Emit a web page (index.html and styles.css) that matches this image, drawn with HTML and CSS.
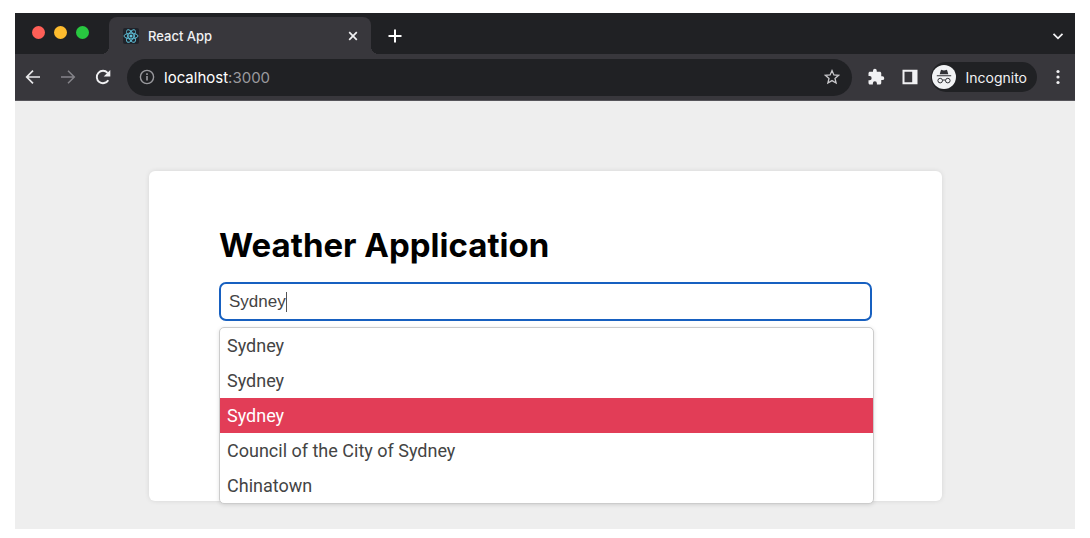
FILE: index.html
```html
<!DOCTYPE html>
<html lang="en">
<head>
<meta charset="utf-8">
<meta name="viewport" content="width=device-width, initial-scale=1">
<title>React App</title>
<link rel="stylesheet" href="styles.css">
</head>
<body>
<div class="window">
  <header class="tabstrip">
    <div class="lights"><span class="light red"></span><span class="light yellow"></span><span class="light green"></span></div>
    <div class="tab">
      <svg class="favicon" viewBox="0 0 16 16" width="16" height="16" aria-hidden="true">
        <rect width="16" height="16" rx="2" fill="#20232a"/>
        <g fill="none" stroke="#61c5de" stroke-width="0.9">
          <ellipse cx="8" cy="8" rx="7" ry="2.8"/>
          <ellipse cx="8" cy="8" rx="7" ry="2.8" transform="rotate(60 8 8)"/>
          <ellipse cx="8" cy="8" rx="7" ry="2.8" transform="rotate(120 8 8)"/>
        </g>
        <circle cx="8" cy="8" r="1.5" fill="#61c5de"/>
      </svg>
      <span class="tab-title">React App</span>
      <button class="icon-btn" aria-label="Close tab"><svg viewBox="0 0 16 16" width="16" height="16"><path d="M4.2 4.2l7.6 7.6M11.8 4.2l-7.6 7.6" stroke="#f1f1f3" stroke-width="1.7"/></svg></button>
    </div>
    <button class="icon-btn new-tab" aria-label="New tab"><svg viewBox="0 0 16 16" width="16" height="16"><path d="M8 1.5v13M1.5 8h13" stroke="#fff" stroke-width="2"/></svg></button>
    <button class="icon-btn tab-search" aria-label="Search tabs"><svg viewBox="0 0 16 16" width="16" height="16"><path d="M3.5 5.8L8 10.3l4.500-4.500" fill="none" stroke="#f1f1f3" stroke-width="1.800"/></svg></button>
  </header>
  <nav class="toolbar" aria-label="Browser toolbar">
    <div class="nav-group">
      <button class="icon-btn" aria-label="Back"><svg viewBox="0 0 16 16" width="16" height="16"><path d="M15 8H2M8 1.700L1.700 8 8 14.300" fill="none" stroke="#e8e8ea" stroke-width="1.700"/></svg></button>
      <button class="icon-btn" aria-label="Forward"><svg viewBox="0 0 16 16" width="16" height="16"><path d="M1 8h13M8 1.700L14.300 8 8 14.300" fill="none" stroke="#85848a" stroke-width="1.500"/></svg></button>
      <button class="icon-btn" aria-label="Reload"><svg viewBox="0 0 16 16" width="16" height="16"><path d="M13.300 11.200A6.200 6.200 0 1 1 12.600 3.800" fill="none" stroke="#f1f1f3" stroke-width="1.900"/><path d="M15.300 1v6.600H8.700z" fill="#f1f1f3"/></svg></button>
    </div>
    <div class="omnibox">
      <svg viewBox="0 0 16 16" width="16" height="16" aria-hidden="true"><circle cx="8" cy="8" r="6.600" fill="none" stroke="#9a9a9e" stroke-width="1.400"/><path d="M8 7v4.500M8 4.300v1.600" stroke="#9a9a9e" stroke-width="1.600"/></svg>
      <span class="url">localhost<span class="port">:3000</span></span>
      <button class="icon-btn" aria-label="Bookmark this tab"><svg viewBox="0 0 16 16" width="16" height="16"><path d="M8 1.600l1.900 4.300 4.700.4-3.600 3.100 1.100 4.600L8 11.600 3.900 14 5 9.400 1.400 6.300l4.700-.4z" fill="none" stroke="#c8c8cb" stroke-width="1.300"/></svg></button>
    </div>
    <div class="actions">
      <button class="icon-btn" aria-label="Extensions"><svg viewBox="0 0 24 24" width="18" height="18"><path fill="#f1f1f3" d="M20.500 11H19V7c0-1.100-.9-2-2-2h-4V3.500a2.500 2.500 0 0 0-5 0V5H4c-1.100 0-2 .9-2 2v3.800h1.500a2.700 2.700 0 0 1 0 5.400H2V20c0 1.100.9 2 2 2h3.800v-1.500a2.700 2.700 0 0 1 5.400 0V22H17c1.100 0 2-.9 2-2v-4h1.500a2.500 2.500 0 0 0 0-5z"/></svg></button>
      <button class="icon-btn" aria-label="Side panel"><svg viewBox="0 0 16 16" width="16" height="16"><path fill="#f1f1f3" fill-rule="evenodd" d="M.5.800h15v14.400H.5zM2.500 2.800v10.400h7.700V2.800z"/></svg></button>
      <button class="profile"><svg viewBox="0 0 24 24" width="24" height="24" aria-hidden="true"><circle cx="12" cy="12" r="12" fill="#f1f2f4"/><path fill="#303135" d="M8.800 5.500q.3-.8 1.100-.6l2.100.5 2.100-.5q.8-.2 1.100.6l1.100 3.700H7.700zM4.800 10.200h14.400v1H4.800z"/><g fill="none" stroke="#303135" stroke-width="1"><circle cx="8.200" cy="15.600" r="2.300"/><circle cx="15.800" cy="15.600" r="2.300"/><path d="M10.500 15.300q1.500-.8 3 0"/></g></svg><span>Incognito</span></button>
      <button class="icon-btn" aria-label="Menu"><svg viewBox="0 0 16 16" width="16" height="16" fill="#f1f1f3"><circle cx="8" cy="2.500" r="1.600"/><circle cx="8" cy="8" r="1.600"/><circle cx="8" cy="13.500" r="1.600"/></svg></button>
    </div>
  </nav>
  <main class="page">
    <section class="card">
      <h1 class="title">Weather Application</h1>
      <div class="search">
        <input class="search-input" type="text" value="Sydney" aria-label="City" autocomplete="off">
        <span class="caret"></span>
        <ul class="suggestions" role="listbox" aria-label="Suggestions">
          <li class="option" role="option">Sydney</li>
          <li class="option" role="option">Sydney</li>
          <li class="option active" role="option" aria-selected="true">Sydney</li>
          <li class="option" role="option">Council of the City of Sydney</li>
          <li class="option" role="option">Chinatown</li>
        </ul>
      </div>
    </section>
  </main>
</div>
</body>
</html>
```
FILE: styles.css
```css
* { box-sizing: border-box; }
body {
  margin: 0;
  padding: 13px 15px 9px;
  background: #fff;
  font-family: Inter, "Liberation Sans", sans-serif;
}
button { font: inherit; color: inherit; border: 0; padding: 0; background: none; }
svg { display: block; flex: none; }
.window { background: #eee; }

.tabstrip {
  display: flex;
  align-items: flex-end;
  height: 41px;
  padding-right: 9px;
  background: #202124;
}
.lights { display: flex; gap: 9px; align-self: flex-start; padding: 13px 20px 0 17px; }
.light { width: 13px; height: 13px; border-radius: 50%; }
.red { background: #ff5f57; }
.yellow { background: #febc2e; }
.green { background: #28c840; }
.tab {
  position: relative;
  display: flex;
  align-items: center;
  width: 262px;
  height: 37px;
  padding: 0 10px 0 14px;
  border-radius: 8px 8px 0 0;
  background: #38373c;
  color: #f1f1f3;
  font-size: 13px;
  font-weight: 500;
}
.tab::before, .tab::after {
  content: "";
  position: absolute;
  bottom: 0;
  width: 8px;
  height: 8px;
}
.tab::before { left: -8px; background: radial-gradient(circle at 0 0, transparent 8px, #38373c 8px); }
.tab::after { right: -8px; background: radial-gradient(circle at 100% 0, transparent 8px, #38373c 8px); }
.tab-title { flex: 1; margin-left: 9px; }
.new-tab { margin: 0 0 10px 16px; }
.tab-search { margin: 0 0 10px auto; }

.toolbar {
  display: flex;
  align-items: center;
  height: 47px;
  padding: 0 9px 0 10px;
  background: #38373c;
  border-bottom: 1px solid #55545a;
}
.nav-group { display: flex; gap: 19px; }
.omnibox {
  flex: 1;
  display: flex;
  align-items: center;
  height: 37px;
  margin: 0 15px 0 16px;
  padding: 0 12px;
  border-radius: 19px;
  background: #202124;
  color: #fff;
  font-size: 15px;
}
.url { flex: 1; margin-left: 9px; }
.port { color: #9a9a9e; }
.actions { display: flex; align-items: center; gap: 17px; }
.profile {
  display: flex;
  align-items: center;
  gap: 9px;
  height: 30px;
  margin: 0 -4px;
  padding: 0 10px 0 1px;
  border-radius: 15px;
  background: #202124;
  color: #f1f1f3;
  font-size: 14px;
}

.page { padding: 70px 133px 28px 134px; }
.card {
  padding: 50px 70px 180px;
  border-radius: 6px;
  background: #fff;
  box-shadow: 0 0 5px rgba(0, 0, 0, 0.1);
}
.title { margin: 0 0 13px; font-size: 33px; line-height: 48px; font-weight: 700; color: #000; }
.search { position: relative; }
.search-input {
  display: block;
  width: 100%;
  height: 39px;
  padding: 0 8px;
  border: 2px solid #1760c0;
  border-radius: 7px;
  outline: none;
  background: #fff;
  color: #444;
  font-family: "Liberation Sans", Arial, sans-serif;
  font-size: 17px;
}
.caret { position: absolute; left: 67px; top: 10px; width: 1px; height: 20px; background: #555; }
.suggestions {
  position: absolute;
  top: 45px;
  left: 0;
  right: -2px;
  margin: 0;
  padding: 0;
  list-style: none;
  border: 1px solid #ccc;
  border-radius: 5px;
  background: #fff;
  box-shadow: 0 1px 4px rgba(0, 0, 0, 0.12);
  color: #444;
  font-family: Roboto, Inter, sans-serif;
  font-size: 18px;
}
.option { padding: 0 7px; line-height: 35px; }
.active { background: #e23d57; color: #fff; }
```
